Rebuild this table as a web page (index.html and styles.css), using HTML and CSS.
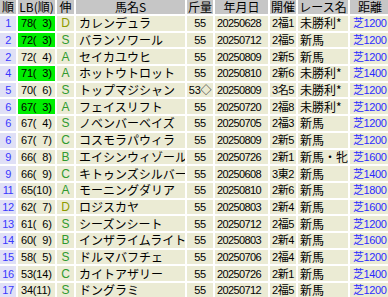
FILE: index.html
```html
<!DOCTYPE html>
<html lang="ja">
<head>
<meta charset="utf-8">
<link rel="stylesheet" href="styles.css">
</head>
<body>
<div class="grid">
<div class="row head"><span class="h">順</span><span class="h">LB(順)</span><span class="h">伸</span><span class="h">馬名S</span><span class="h">斤量</span><span class="h">年月日</span><span class="h">開催</span><span class="h">レース名</span><span class="h">距離</span></div>
<div class="row"><span class="rank">1</span><span class="lb hi">78(&#8199;3)</span><span class="nobi d">D</span><span class="name">カレンデュラ</span><span class="kin">55</span><span class="date">20250628</span><span class="kai">2福1</span><span class="race">未勝利*</span><span class="dist">芝1200</span></div>
<div class="row"><span class="rank">2</span><span class="lb hi">72(&#8199;3)</span><span class="nobi">S</span><span class="name">バランソワール</span><span class="kin">55</span><span class="date">20250712</span><span class="kai">2福5</span><span class="race">新馬</span><span class="dist">芝1200</span></div>
<div class="row"><span class="rank">2</span><span class="lb">72(&#8199;4)</span><span class="nobi">A</span><span class="name">セイカユウヒ</span><span class="kin">55</span><span class="date">20250809</span><span class="kai">2新5</span><span class="race">新馬</span><span class="dist">芝1200</span></div>
<div class="row"><span class="rank">4</span><span class="lb hi">71(&#8199;3)</span><span class="nobi">A</span><span class="name">ホットウトロット</span><span class="kin">55</span><span class="date">20250810</span><span class="kai">2新6</span><span class="race">未勝利*</span><span class="dist">芝1400</span></div>
<div class="row"><span class="rank">5</span><span class="lb">70(&#8199;6)</span><span class="nobi">S</span><span class="name">トップマジシャン</span><span class="kin">53◇</span><span class="date">20250809</span><span class="kai">3名5</span><span class="race">未勝利*</span><span class="dist">芝1200</span></div>
<div class="row"><span class="rank">6</span><span class="lb hi">67(&#8199;3)</span><span class="nobi">A</span><span class="name">フェイスリフト</span><span class="kin">55</span><span class="date">20250720</span><span class="kai">2福8</span><span class="race">未勝利*</span><span class="dist">芝1200</span></div>
<div class="row"><span class="rank">6</span><span class="lb">67(&#8199;4)</span><span class="nobi">S</span><span class="name">ノベンバーベイズ</span><span class="kin">55</span><span class="date">20250705</span><span class="kai">2福3</span><span class="race">新馬</span><span class="dist">芝1200</span></div>
<div class="row"><span class="rank">6</span><span class="lb">67(&#8199;7)</span><span class="nobi">C</span><span class="name">コスモラパウィラ</span><span class="kin">55</span><span class="date">20250809</span><span class="kai">2新5</span><span class="race">新馬</span><span class="dist">芝1200</span></div>
<div class="row"><span class="rank">9</span><span class="lb">66(&#8199;8)</span><span class="nobi">B</span><span class="name">エイシンウィゾール</span><span class="kin">55</span><span class="date">20250726</span><span class="kai">2新1</span><span class="race">新馬・牝</span><span class="dist">芝1600</span></div>
<div class="row"><span class="rank">9</span><span class="lb">66(&#8199;9)</span><span class="nobi">C</span><span class="name">キトゥンズシルバー</span><span class="kin">55</span><span class="date">20250608</span><span class="kai">3東2</span><span class="race">新馬</span><span class="dist">芝1400</span></div>
<div class="row"><span class="rank">11</span><span class="lb">65(10)</span><span class="nobi">A</span><span class="name">モーニングダリア</span><span class="kin">55</span><span class="date">20250810</span><span class="kai">2新6</span><span class="race">新馬</span><span class="dist">芝1800</span></div>
<div class="row"><span class="rank">12</span><span class="lb">62(&#8199;7)</span><span class="nobi d">D</span><span class="name">ロジスカヤ</span><span class="kin">55</span><span class="date">20250803</span><span class="kai">2新4</span><span class="race">新馬</span><span class="dist">芝1600</span></div>
<div class="row"><span class="rank">13</span><span class="lb">61(&#8199;6)</span><span class="nobi">S</span><span class="name">シーズンシート</span><span class="kin">55</span><span class="date">20250712</span><span class="kai">2福5</span><span class="race">新馬</span><span class="dist">芝1200</span></div>
<div class="row"><span class="rank">14</span><span class="lb">60(&#8199;9)</span><span class="nobi">B</span><span class="name">インザライムライト</span><span class="kin">55</span><span class="date">20250803</span><span class="kai">2新4</span><span class="race">新馬</span><span class="dist">芝1600</span></div>
<div class="row"><span class="rank">15</span><span class="lb">58(&#8199;5)</span><span class="nobi">S</span><span class="name">ドルマバフチェ</span><span class="kin">55</span><span class="date">20250706</span><span class="kai">2福4</span><span class="race">新馬</span><span class="dist">芝1200</span></div>
<div class="row"><span class="rank">16</span><span class="lb">53(14)</span><span class="nobi">C</span><span class="name">カイトアザリー</span><span class="kin">55</span><span class="date">20250726</span><span class="kai">2新1</span><span class="race">新馬</span><span class="dist">芝1400</span></div>
<div class="row"><span class="rank">17</span><span class="lb">34(11)</span><span class="nobi">S</span><span class="name">ドングラミ</span><span class="kin">55</span><span class="date">20250712</span><span class="kai">2福5</span><span class="race">新馬</span><span class="dist">芝1200</span></div>
</div>
</body>
</html>
```
FILE: styles.css
```css
html, body {
  margin: 0;
  padding: 0;
  background: #ffffff;
  overflow: hidden;
}
.grid {
  display: flex;
  flex-direction: column;
  gap: 2px;
  width: 388px;
  font-family: "Liberation Sans", "Noto Sans CJK JP", sans-serif;
  font-size: 11px;
  color: #000;
}
.row {
  display: grid;
  grid-template-columns: 16px 37px 17px 109px 26px 53px 26px 50px 40px;
  column-gap: 2px;
  height: 14.7px;
}
.row.head { height: 14px; }
.row > span {
  display: flex;
  align-items: center;
  white-space: nowrap;
  overflow: hidden;
  background: #ebebd4;
  padding-left: 2px;
  line-height: 14px;
}
.row > span.h {
  background: #c6c6c6;
  justify-content: center;
  padding-left: 0;
  overflow: visible;
  font-family: "Noto Sans CJK JP", sans-serif;
  font-size: 12px;
}
.row > span.rank {
  background: #e0e0f6;
  color: #3838ff;
  justify-content: center;
  padding-left: 0;
  letter-spacing: -0.4px;
}
.row > span.lb { padding-left: 3px; letter-spacing: -0.2px; }
.row > span.hi { background: #00ee00; }
.row > span.nobi {
  justify-content: center;
  padding-left: 0;
  color: #2f9a2f;
  font-size: 12px;
}
.row > span.nobi.d { color: #8c9a00; }
.row > span.name, .row > span.race {
  font-family: "Noto Sans CJK JP", sans-serif;
  font-size: 12px;
}
.row > span.name { padding-left: 3px; }
.row > span.kin { justify-content: center; padding-left: 0; letter-spacing: -0.3px; }
.row > span.date { letter-spacing: -0.6px; }
.row > span.kai { letter-spacing: -0.4px; }
.row > span.dist { color: #2a2aff; padding-left: 3px; letter-spacing: -0.4px; }
```
